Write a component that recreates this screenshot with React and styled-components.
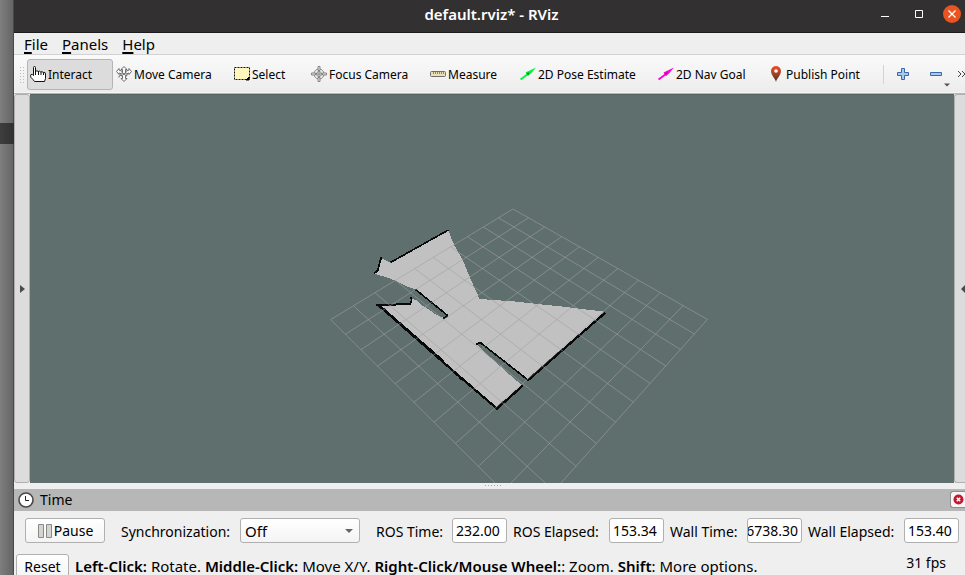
import React from "react";
import styled, { createGlobalStyle } from "styled-components";

const GlobalStyle = createGlobalStyle`
  * { box-sizing: border-box; }
  html, body { margin: 0; height: 100%; overflow: hidden; }
  body, button, input, select { font-family: "Noto Sans", "Open Sans", sans-serif; font-size: 14px; color: #000; }
  #root { height: 100%; }
`;

const Desktop = styled.div`
  display: flex;
  height: 100vh;
  overflow: hidden;
`;

const Backdrop = styled.div`
  flex: 0 0 14px;
  padding-top: 123px;
  background: linear-gradient(to right, #7e7e7e, #666 90%, #484848 92%);
`;

const BackdropMark = styled.div`
  height: 21px;
  background: linear-gradient(to right, #3e3e3e, #303030);
`;

const Window = styled.div`
  flex: 1;
  min-width: 0;
  display: flex;
  flex-direction: column;
  background: #efefef;
`;

const TitleBar = styled.header`
  flex: 0 0 33px;
  display: grid;
  grid-template-columns: 1fr auto 1fr;
  align-items: center;
  padding: 0 4px 4px 0;
  background: #333031;
  border-bottom: 1px solid #1d1c1c;
`;

const Title = styled.h1`
  grid-column: 2;
  margin: 0 0 0 8px;
  color: #fff;
  font-size: 15px;
  line-height: 20px;
  font-weight: 600;
`;

const WindowControls = styled.div`
  display: flex;
  justify-content: flex-end;
  align-items: center;
  gap: 14px;
`;

const WindowButton = styled.button`
  width: 20px;
  height: 20px;
  padding: 0;
  border: 0;
  border-radius: 50%;
  background: transparent;
  svg { display: block; margin: auto; }
`;

const CloseButton = styled(WindowButton)`
  width: 18px;
  height: 18px;
  background: #e95420;
`;

const MenuBar = styled.nav`
  flex: 0 0 22px;
  display: flex;
  gap: 14px;
  padding-left: 10px;
  border-bottom: 1px solid #d2d2d2;
`;

const MenuItem = styled.button`
  padding: 0;
  border: 0;
  background: none;
  font-size: 15px;
  line-height: 20px;
  span { text-decoration: underline; text-decoration-thickness: 2px; text-underline-offset: 2px; }
`;

const Toolbar = styled.div`
  flex: 0 0 39px;
  display: flex;
  align-items: center;
  overflow: hidden;
  padding-left: 5px;
  background: linear-gradient(#fafafa, #ececec);
  border-bottom: 1px solid #b5b5b5;
  box-shadow: inset 0 -1px #f4f4f4;
`;

const Grip = styled.div`
  flex: 0 0 6px;
  height: 17px;
  margin-right: 2px;
  background: radial-gradient(circle, #bbb 1px, transparent 1px) 0 0 / 3px 3px;
`;

const Tool = styled.button`
  flex: 0 0 ${(p) => p.$width}px;
  height: 31px;
  display: flex;
  align-items: center;
  gap: 2px;
  padding: 0 0 0 2px;
  border: 1px solid ${(p) => (p.$active ? "#b4b4b4" : "transparent")};
  border-radius: 3px;
  background: ${(p) => (p.$active ? "#dcdcdc" : "transparent")};
  font-size: 12px;
  white-space: nowrap;
  svg { flex: none; }
`;

const Separator = styled.div`
  flex: 0 0 1px;
  height: 19px;
  margin-right: 12px;
  background: #d3d3d3;
`;

const IconButton = styled.button`
  flex: 0 0 ${(p) => p.$width}px;
  height: 31px;
  padding: 0;
  border: 0;
  background: none;
  text-align: left;
  svg { display: block; }
`;

const Body = styled.main`
  flex: 1;
  min-height: 0;
  display: flex;
`;

const Collapse = styled.button`
  flex: 0 0 ${(p) => (p.$right ? 11 : 16)}px;
  display: flex;
  align-items: center;
  justify-content: ${(p) => (p.$right ? "flex-end" : "center")};
  padding: 0;
  border: 1px solid #b0b0b0;
  border-right-width: ${(p) => (p.$right ? 0 : 1)}px;
  border-radius: ${(p) => (p.$right ? "3px 0 0 3px" : "3px")};
  background: #dcdcdc;
`;

const Viewport = styled.div`
  flex: 1;
  min-width: 0;
  background: #5f6f6d;
  border-top: 1px solid #566563;
  svg { display: block; width: 100%; height: 100%; }
`;

const Splitter = styled.div`
  flex: 0 0 6px;
  display: flex;
  justify-content: center;
  gap: 2px;
  padding: 2px 0 0 6px;
  i { width: 1px; height: 1px; background: #aaa; }
`;

const DockTitle = styled.div`
  flex: 0 0 22px;
  display: flex;
  align-items: center;
  justify-content: space-between;
  padding-left: 4px;
  background: #b7b7b7;
`;

const DockName = styled.h2`
  display: flex;
  align-items: center;
  gap: 6px;
  margin: 0;
  font-size: 14px;
  line-height: 22px;
  font-weight: 400;
`;

const DockClose = styled.button`
  width: 15px;
  height: 17px;
  margin-bottom: 2px;
  padding: 0;
  border: 1px solid #8d8d8d;
  border-right: 0;
  border-radius: 3px 0 0 3px;
  background: #f6f6f6;
  svg { display: block; margin-left: 2px; }
`;

const TimeRow = styled.section`
  flex: 0 0 43px;
  display: flex;
  align-items: flex-start;
  justify-content: space-between;
  padding: 7px 6px 0 11px;
`;

const PushButton = styled.button`
  flex: 0 0 ${(p) => p.$width}px;
  height: 25px;
  display: flex;
  align-items: center;
  justify-content: center;
  gap: 1px;
  padding: 0;
  border: 1px solid #b0b0b0;
  border-radius: 3px;
  background: linear-gradient(#fff, #f4f4f4);
  line-height: 23px;
`;

const Field = styled.label`
  flex: 0 0 ${(p) => p.$width}px;
  margin: 0 ${(p) => (p.$spaced ? 10 : 0)}px;
  display: flex;
  justify-content: space-between;
  line-height: 27px;
  white-space: nowrap;
`;

const SelectBox = styled.span`
  display: grid;
  align-items: center;
  width: 120px;
  height: 25px;
  svg { grid-area: 1 / 1; justify-self: end; margin-right: 7px; pointer-events: none; z-index: 1; }
`;

const Select = styled.select`
  grid-area: 1 / 1;
  appearance: none;
  width: 100%;
  height: 25px;
  padding: 0 4px;
  border: 1px solid #b0b0b0;
  border-radius: 3px;
  background: linear-gradient(#fff, #f4f4f4);
  font-size: 15px;
`;

const TimeInput = styled.input`
  width: 55px;
  height: 25px;
  padding: 0 ${(p) => (p.$tail ? "3px 0 0" : "0 0 3px")};
  direction: ${(p) => (p.$tail ? "rtl" : "ltr")};
  border: 1px solid #b0b0b0;
  border-radius: 3px;
  background: #fff;
`;

const StatusBar = styled.footer`
  flex: 0 0 21px;
  min-height: 0;
  overflow: hidden;
  display: flex;
  align-items: flex-start;
  padding-left: 2px;
`;

const Hint = styled.p`
  flex: 1;
  margin: 0 0 0 6px;
  font-size: 15px;
  line-height: 24px;
  white-space: nowrap;
  b { font-weight: 600; }
`;

const Fps = styled.output`
  margin-right: 19px;
  line-height: 18px;
`;

/* A 10 × 10 ground grid, projected from its four corners. */
const corners = { a: [513, 209], b: [707.4, 319.4], c: [530, 517.6], d: [330.7, 319.6] };

function project(u, v) {
  const { a, b, c, d } = corners;
  const dx1 = b[0] - c[0], dx2 = d[0] - c[0], sx = a[0] - b[0] + c[0] - d[0];
  const dy1 = b[1] - c[1], dy2 = d[1] - c[1], sy = a[1] - b[1] + c[1] - d[1];
  const det = dx1 * dy2 - dx2 * dy1;
  const g = (sx * dy2 - dx2 * sy) / det;
  const h = (dx1 * sy - sx * dy1) / det;
  const w = g * u + h * v + 1;
  return [0, 1]
    .map((k) => ((b[k] - a[k] + g * b[k]) * u + (d[k] - a[k] + h * d[k]) * v + a[k]) / w)
    .join(" ");
}

const gridPath = Array.from({ length: 11 }, (_, i) => {
  const t = i / 10;
  return `M${project(t, 0)}L${project(t, 1)}M${project(0, t)}L${project(1, t)}`;
}).join("");

const Scene = () => (
  <svg viewBox="30 95 924 388" preserveAspectRatio="xMidYMid slice" role="img" aria-label="Map view">
    <g transform="translate(360 200) scale(.33333)" shapeRendering="crispEdges">
      <path
        fill="#c1c1c1"
        d="M265 90 273 112 282 134 308 180 326 223 342 260 359 297 400 300 460 304 540 313 610 320 674 328 733 335 504 540 359 427 351 434 368 450 384 466 420 498 450 525 486 556 411 624 60 315 151 314 155 297 168 300 185 315 205 328 230 345 250 353 261 347 166 268 140 259 104 241 76 231 43 221 53 213 64 175 92 188Z"
      />
      <g fill="none" stroke="#080a0a">
        <path strokeWidth="5" d="M265 90 92 187M64 172 59 188 53 212 42 220M166 268 261 345 261 350 250 355M151 291 155 298 152 310M349 433 360 427 504 540" />
        <path strokeWidth="6" d="M49 314 100 314 152 311" />
        <path strokeWidth="7" d="M56 316 290 522 411 626 488 557M502 542 736 338" />
        <path strokeWidth="8" d="M60 319 160 406 250 484M411 624 440 599M504 540 600 456" />
        <path strokeWidth="4" d="M280 517 290 527M298 535 310 541M322 553 332 560" />
      </g>
    </g>
    <path d={gridPath} fill="none" stroke="#a0a0a4" strokeOpacity=".58" strokeWidth="1" />
  </svg>
);

const HandIcon = () => (
  <svg width="16" height="16" viewBox="0 0 16 16">
    <path d="M3.500 9V1.500Q3.500.500 4.500.500T5.500 1.500V5.500Q7 4 8.200 5.500 9.500 4.500 10.800 6 12 5 13.300 6.500 15.500 5.500 15.500 8V12.500L14.500 15.500H4.500L3 13.500 1 11.500Q0 9.500 1 8.500 2.500 8 3.500 9.500Z" fill="#fff" stroke="#111" />
    <path d="M5.500 5v4M8.500 5v4M11 6v3M13.500 6.500V9" stroke="#111" fill="none" />
  </svg>
);

const MoveIcon = () => (
  <svg width="16" height="16" viewBox="0 0 16 16" fill="#f7f7f7" stroke="#6d6d6d">
    <path d="M8 6 3 4V2.500L.500 5.500 3 8.500V7L7 8.500 3 10V11.500M8 6 13 4V2.500L15.500 5.500 13 8.500V7L9 8.500" />
    <path d="M8 .500 11 3.500H9.500V7L11.500 9 9.500 10V12.500H11L8 15.500 5 12.500H6.500V10L4.500 9 6.500 7V3.500H5Z" />
    <path d="M5.500 6 10.500 10M10.500 6 5.500 10" />
  </svg>
);

const SelectIcon = () => (
  <svg width="16" height="16" viewBox="0 0 16 16">
    <path d="M.500 1.500H15.500V13.500H.500Z" fill="#fff7bd" stroke="#111" strokeDasharray="2 1" />
    <path d="M15 11v3h-3z" fill="#000" stroke="#000" />
  </svg>
);

const FocusIcon = () => (
  <svg width="16" height="16" viewBox="0 0 16 16" fill="none" stroke="#858585">
    <circle cx="8" cy="8" r="5" />
    <circle cx="8" cy="8" r="2.500" />
    <path d="M7 .500h2v4H7zM7 11.500h2v4H7zM.500 7h4v2h-4zM11.500 7h4v2h-4z" fill="#e4e4e4" />
    <path d="M8 5v6M5 8h6" />
  </svg>
);

const RulerIcon = () => (
  <svg width="16" height="16" viewBox="0 0 16 16">
    <rect x=".5" y="5.5" width="15" height="5" rx="1" fill="#ece0b4" stroke="#6f6f6f" />
    <path d="M3.500 6v2M5.500 6v2M7.500 6v2M9.500 6v2M11.500 6v2M13.500 6v2" stroke="#8c8874" />
  </svg>
);

const ArrowIcon = ({ color, dark }) => (
  <svg width="16" height="16" viewBox="0 0 16 16">
    <path d="M.500 13.500 8 8" stroke={color} strokeWidth="2" />
    <path d="M5.500 6.500 16 1.500 11 7.500 8 10Z" fill={color} />
    <path d="M6.500 7 9.500 6.500 8 9.500Z" fill={dark} />
  </svg>
);

const PinIcon = () => (
  <svg width="16" height="16" viewBox="0 0 16 16">
    <defs>
      <linearGradient id="pin" x2="0" y2="1">
        <stop stopColor="#f0512b" />
        <stop offset="1" stopColor="#4d341f" />
      </linearGradient>
    </defs>
    <path d="M8 16C7.500 12.500 3 9.500 3 5A5 5 0 0 1 13 5C13 9.500 8.500 12.500 8 16Z" fill="url(#pin)" />
    <circle cx="8" cy="5" r="1.800" fill="#fff" />
  </svg>
);

const tools = [
  { label: "Interact", width: 86, icon: <HandIcon />, active: true },
  { label: "Move Camera", width: 118, icon: <MoveIcon /> },
  { label: "Select", width: 77, icon: <SelectIcon /> },
  { label: "Focus Camera", width: 119, icon: <FocusIcon /> },
  { label: "Measure", width: 90, icon: <RulerIcon /> },
  { label: "2D Pose Estimate", width: 138, icon: <ArrowIcon color="#00f53c" dark="#087a26" /> },
  { label: "2D Nav Goal", width: 110, icon: <ArrowIcon color="#ff00dc" dark="#96117e" /> },
  { label: "Publish Point", width: 118, icon: <PinIcon /> },
];

const times = [
  { label: "ROS Time:", value: "232.00", width: 131 },
  { label: "ROS Elapsed:", value: "153.34", width: 151 },
  { label: "Wall Time:", value: "6738.30", width: 132, tail: true },
  { label: "Wall Elapsed:", value: "153.40", width: 151 },
];

export default function App() {
  return (
    <Desktop>
      <GlobalStyle />
      <Backdrop><BackdropMark /></Backdrop>
      <Window>
        <TitleBar>
          <Title>default.rviz* - RViz</Title>
          <WindowControls>
            <WindowButton aria-label="Minimize">
              <svg width="10" height="10"><path d="M1 7h8v1H1z" fill="#fff" /></svg>
            </WindowButton>
            <WindowButton aria-label="Maximize">
              <svg width="10" height="10"><path d="M1.500 1.500h7v7h-7z" fill="none" stroke="#fff" /></svg>
            </WindowButton>
            <CloseButton aria-label="Close">
              <svg width="10" height="10"><path d="M1.500 1.500 8.500 8.500M8.500 1.500 1.500 8.500" stroke="#fff" strokeWidth="1.300" /></svg>
            </CloseButton>
          </WindowControls>
        </TitleBar>
        <MenuBar>
          <MenuItem><span>F</span>ile</MenuItem>
          <MenuItem><span>P</span>anels</MenuItem>
          <MenuItem><span>H</span>elp</MenuItem>
        </MenuBar>
        <Toolbar>
          <Grip />
          {tools.map((t) => (
            <Tool key={t.label} $width={t.width} $active={t.active} aria-pressed={!!t.active}>
              {t.icon}
              {t.label}
            </Tool>
          ))}
          <Separator />
          <IconButton $width={33} aria-label="Add tool">
            <svg width="14" height="14" viewBox="0 0 14 14">
              <path d="M5.500 1.500h3v4h4v3h-4v4h-3v-4h-4v-3h4z" fill="#a9c8ea" stroke="#3868ac" />
            </svg>
          </IconButton>
          <IconButton $width={28} aria-label="Remove tool">
            <svg width="22" height="31" viewBox="0 0 22 31">
              <path d="M1.500 13.500h11v3h-11z" fill="#a9c8ea" stroke="#3868ac" />
              <path d="M15 24.500h6l-3 3z" fill="#555" />
            </svg>
          </IconButton>
          <IconButton $width={10} aria-label="More tools">
            <svg width="10" height="8" viewBox="0 0 10 8">
              <path d="M1 1 4 4 1 7M5 1 8 4 5 7" fill="none" stroke="#444" />
            </svg>
          </IconButton>
        </Toolbar>
        <Body>
          <Collapse aria-label="Show left panels">
            <svg width="5" height="8"><path d="M0 0 5 4 0 8Z" fill="#4a4a4a" /></svg>
          </Collapse>
          <Viewport><Scene /></Viewport>
          <Collapse $right aria-label="Show right panels">
            <svg width="4" height="8"><path d="M4 0 0 4 4 8Z" fill="#4a4a4a" /></svg>
          </Collapse>
        </Body>
        <Splitter><i /><i /><i /><i /><i /><i /></Splitter>
        <DockTitle>
          <DockName>
            <svg width="16" height="16" viewBox="0 0 16 16">
              <circle cx="8" cy="8" r="7" fill="#fff" stroke="#484848" strokeWidth="1.600" />
              <path d="M7.500 4v4.500H11" fill="none" stroke="#222" />
            </svg>
            Time
          </DockName>
          <DockClose aria-label="Close Time panel">
            <svg width="11" height="11" viewBox="0 0 11 11">
              <circle cx="5.500" cy="5.500" r="5" fill="#c9162f" />
              <path d="M3.800 3.800 7.200 7.200M7.200 3.800 3.800 7.200" stroke="#fff" strokeWidth="1.500" />
            </svg>
          </DockClose>
        </DockTitle>
        <TimeRow>
          <PushButton $width={80}>
            <svg width="16" height="16" viewBox="0 0 16 16">
              <path d="M1.500 1.500h5v13h-5zM9.500 1.500h5v13h-5z" fill="#d3d5d0" stroke="#888a85" />
            </svg>
            Pause
          </PushButton>
          <Field $width={239} $spaced>
            Synchronization:
            <SelectBox>
              <Select defaultValue="Off">
                <option>Off</option>
                <option>Exact</option>
                <option>Approximate</option>
              </Select>
              <svg width="8" height="4"><path d="M0 0h8L4 4z" fill="#666" /></svg>
            </SelectBox>
          </Field>
          {times.map((t) => (
            <Field key={t.label} $width={t.width}>
              {t.label}
              <TimeInput $tail={t.tail} readOnly value={t.value} />
            </Field>
          ))}
        </TimeRow>
        <StatusBar>
          <PushButton $width={53}>Reset</PushButton>
          <Hint>
            <b>Left-Click:</b> Rotate. <b>Middle-Click:</b> Move X/Y. <b>Right-Click/Mouse Wheel:</b>: Zoom. <b>Shift</b>: More options.
          </Hint>
          <Fps>31 fps</Fps>
        </StatusBar>
      </Window>
    </Desktop>
  );
}
